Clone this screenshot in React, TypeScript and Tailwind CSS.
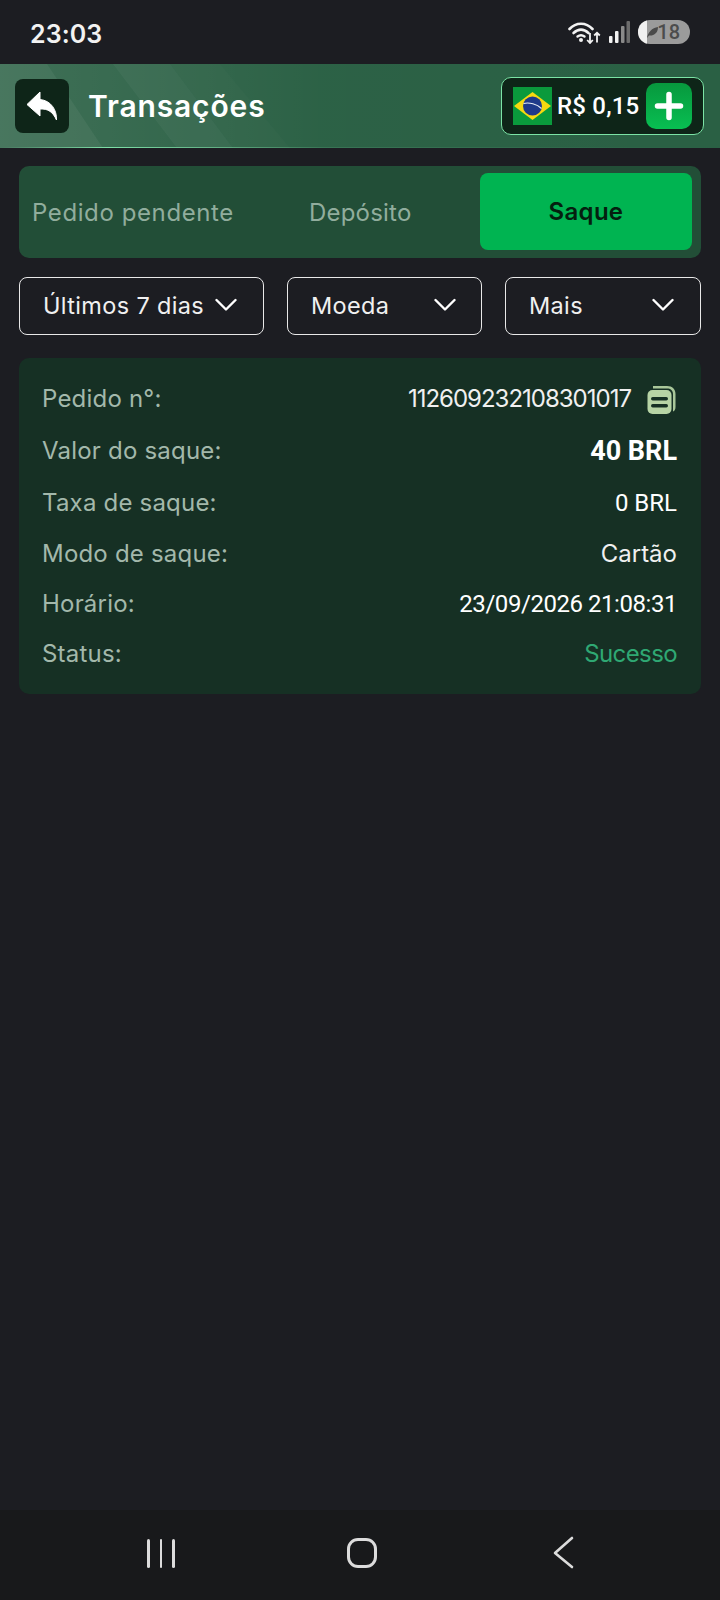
const mont = "font-['Inter','Noto_Sans',sans-serif]"
const roboto = "font-['Roboto',sans-serif]"

const rows = [
  { label: "Pedido n°:", h: "h-[52px]" },
  { label: "Valor do saque:", h: "h-[52px]" },
  { label: "Taxa de saque:", h: "h-[52px]" },
  { label: "Modo de saque:", h: "h-[50px]" },
  { label: "Horário:", h: "h-[50px]" },
  { label: "Status:", h: "h-[50px]" },
]

function StatusBar() {
  return (
    <div className="h-16 flex items-center justify-between pl-[30px] pr-[30px]">
      <span className="pt-[6px] font-['Inter',sans-serif] text-[25px] font-semibold text-[#f2f2f2] tracking-[0.1px]">23:03</span>
      <div className="flex items-center">
        <svg width="33" height="24" viewBox="0 0 33 24" fill="none" className="mr-[8px]">
          <path d="M1.500 9C8 2 18 2 24.500 9" stroke="#f2f2f2" strokeWidth="2.600" strokeLinecap="round" />
          <path d="M5.500 13C10.500 8.500 15.500 8.500 20.500 13" stroke="#f2f2f2" strokeWidth="2.600" strokeLinecap="round" />
          <path d="M9.500 16.500C11.500 15 14.500 15 16.500 16.500" stroke="#f2f2f2" strokeWidth="2.400" strokeLinecap="round" />
          <circle cx="13" cy="20" r="2" fill="#f2f2f2" />
          <path d="M22 13V22.500M19.200 20L22 23L24.800 20" stroke="#f2f2f2" strokeWidth="1.800" />
          <path d="M29 22.500V13M26.200 15.500L29 12.700L31.800 15.500" stroke="#f2f2f2" strokeWidth="1.800" />
        </svg>
        <svg width="21" height="24" viewBox="0 0 21 24" className="mr-[8px]">
          <rect x="0" y="16" width="3.500" height="7" rx="1" fill="#f2f2f2" />
          <rect x="6" y="11" width="3.500" height="12" rx="1" fill="#f2f2f2" />
          <rect x="12" y="6" width="3.500" height="17" rx="1" fill="#8a8a8a" />
          <rect x="17.500" y="1" width="3.500" height="22" rx="1" fill="#6c6c6c" />
        </svg>
        <div className="w-[52px] h-6 rounded-full bg-[#9b9b9b] overflow-hidden relative flex items-center justify-end pr-[10px]">
          <div className="absolute left-0 top-0 bottom-0 w-[9px] bg-[#f0f0f0]" />
          <svg width="13" height="13" viewBox="0 0 13 13" className="absolute left-[8px] top-[6px]">
            <path d="M1 12C2 6 6 2 12 1C12 7 8 10 3 9.500Z" fill="#4a4a4a" />
          </svg>
          <span className="font-['Roboto',sans-serif] text-[20px] font-medium text-[#4c4c4c] leading-none">18</span>
        </div>
      </div>
    </div>
  )
}

function Header() {
  return (
    <div className="h-[84px] relative bg-[#2a6044] flex items-center justify-between pl-[15px] pr-[16px] pb-[1px] overflow-hidden">
      <svg width="720" height="84" viewBox="0 0 720 84" className="absolute inset-0">
        <defs>
          <linearGradient id="fade" x1="0" x2="1" y1="0" y2="0">
            <stop offset="0" stopColor="#fff" stopOpacity="0.1" />
            <stop offset="0.45" stopColor="#fff" stopOpacity="0.01" />
            <stop offset="1" stopColor="#fff" stopOpacity="0" />
          </linearGradient>
          <linearGradient id="line" x1="0" x2="1" y1="0" y2="0">
            <stop offset="0" stopColor="#7fe0a8" stopOpacity="0" />
            <stop offset="0.15" stopColor="#7fe0a8" />
            <stop offset="0.45" stopColor="#7fe0a8" stopOpacity="0.15" />
            <stop offset="1" stopColor="#7fe0a8" stopOpacity="0" />
          </linearGradient>
        </defs>
        <rect width="720" height="84" fill="url(#fade)" />
        <polygon points="0,0 47,0 103,84 0,84" fill="#fff" opacity="0.05" />
        <polygon points="113,0 170,0 233,84 177,84" fill="#fff" opacity="0.04" />
        <polygon points="170,0 220,0 290,84 233,84" fill="#fff" opacity="0.015" />
        <rect y="83" width="720" height="1" fill="url(#line)" />
      </svg>
      <div className="relative flex items-center">
        <div className="w-[54px] h-[54px] rounded-[8px] bg-[#0e2518] flex items-center justify-center">
          <svg width="32" height="30" viewBox="0 0 32 30">
            <path d="M14 1L1 13.500L14 25V18C22 17.500 27 21 30.500 29C31 19 25 9.500 14 8.500Z" fill="#fff" stroke="#fff" strokeLinejoin="round" strokeWidth="1" />
          </svg>
        </div>
        <span className={`${mont} ml-[19px] pt-[2px] text-[30px] font-semibold text-white tracking-[0.85px]`}>Transações</span>
      </div>
      <div className="relative w-[203px] h-[58px] rounded-[10px] border border-[#7be3a5] bg-[#0e2518] flex items-center pl-[11px]">
        <svg width="39" height="38" viewBox="0 0 39 38">
          <rect width="39" height="38" fill="#0a9a3c" />
          <polygon points="19.500,5 38,19 19.500,33 1,19" fill="#f6d90f" />
          <circle cx="19.500" cy="19" r="9.500" fill="#1e3a8a" />
          <path d="M10.500 16.500C16 15 24 17 28.500 21.500" stroke="#e8eef5" strokeWidth="1.200" fill="none" />
        </svg>
        <span className={`${roboto} ml-[5px] text-[24px] font-medium text-white tracking-[0.2px] whitespace-nowrap`}>R$ 0,15</span>
        <div className="ml-auto mr-[11px] w-[46px] h-[46px] rounded-[10px] bg-gradient-to-b from-[#07983d] to-[#08bf52] flex items-center justify-center">
          <svg width="30" height="30" viewBox="0 0 30 30">
            <path d="M15 3.500V26.500M3.500 15H26.500" stroke="#fff" strokeWidth="5.500" strokeLinecap="round" />
          </svg>
        </div>
      </div>
    </div>
  )
}

function Tabs() {
  return (
    <div className="h-[92px] mt-[18px] mx-[19px] rounded-[10px] bg-[#224e37] flex items-center pr-[9px] pb-[2px]">
      <span className={`${mont} ml-[13px] pt-[4px] w-[277px] text-[24px] text-[#91ad9d] tracking-[0.6px] whitespace-nowrap`}>Pedido pendente</span>
      <span className={`${mont} pt-[4px] w-[150px] text-[24px] text-[#91ad9d] tracking-[0.2px]`}>Depósito</span>
      <div className={`${mont} ml-auto pt-[2px] w-[212px] h-[77px] rounded-[8px] bg-[#00b451] flex items-center justify-center text-[24px] font-semibold text-[#04200f] tracking-[0.3px]`}>
        Saque
      </div>
    </div>
  )
}

function Filter({ label, w, pr }: { label: string; w: string; pr: string }) {
  return (
    <div className={`${w} ${pr} pl-[23px] h-[58px] rounded-[8px] border border-[#e8e8e8] flex items-center justify-between`}>
      <span className={`${mont} text-[23.500px] text-[#f0f0f0] tracking-[0.35px] whitespace-nowrap`}>{label}</span>
      <svg width="22" height="14" viewBox="0 0 22 14" className="shrink-0 -mt-[2px]">
        <path d="M1.500 2L11 11.500L20.500 2" stroke="#fff" strokeWidth="2.400" fill="none" strokeLinecap="round" strokeLinejoin="round" />
      </svg>
    </div>
  )
}

function Filters() {
  return (
    <div className="mt-[19px] mx-[19px] flex justify-between">
      <Filter label="Últimos 7 dias" w="w-[245px]" pr="pr-[26px]" />
      <Filter label="Moeda" w="w-[195px]" pr="pr-[25px]" />
      <Filter label="Mais" w="w-[196px]" pr="pr-[26px]" />
    </div>
  )
}

function CopyIcon() {
  return (
    <svg width="30" height="30" viewBox="0 0 30 30" className="ml-[16px]">
      <path d="M6 2H20C25.500 2 28.500 5.500 28.500 10V23C28.500 25.500 27.500 27 26 27.500V10C26 6.500 23.500 4.500 20 4.500H6Z" fill="#a9c79a" />
      <rect x="0.500" y="6" width="24" height="24" rx="5" fill="#b7d4a5" />
      <rect x="4" y="13" width="17" height="3.500" rx="1.700" fill="#163024" />
      <rect x="4" y="20" width="17" height="3.500" rx="1.700" fill="#163024" />
    </svg>
  )
}

function Values({ i }: { i: number }) {
  if (i === 0) {
    return (
      <div className="flex items-center">
        <span className={`${mont} text-[24px] text-[#f0f0f0] tracking-[-1px]`}>112609232108301017</span>
        <CopyIcon />
      </div>
    )
  }
  if (i === 1) return <span className={`${roboto} text-[27px] font-bold text-white`}>40 BRL</span>
  if (i === 2) return <span className={`${roboto} text-[24px] text-white`}>0 BRL</span>
  if (i === 3) return <span className={`${mont} text-[24px] text-[#f0f0f0]`}>Cartão</span>
  if (i === 4) return <span className={`${roboto} text-[24px] text-white tracking-[-0.45px]`}>23/09/2026 21:08:31</span>
  return <span className={`${mont} text-[24px] text-[#2fa873] tracking-[-0.6px]`}>Sucesso</span>
}

function Card() {
  return (
    <div className="mt-[23px] mx-[19px] h-[336px] rounded-[10px] bg-[#163024] pl-[23px] pr-[24px] pt-[15px]">
      {rows.map((r, i) => (
        <div key={r.label} className={`${r.h} flex items-center justify-between`}>
          <span className={`${mont} text-[24px] text-[#a3b8ab] tracking-[0.2px]`}>{r.label}</span>
          <Values i={i} />
        </div>
      ))}
    </div>
  )
}

function NavBar() {
  return (
    <div className="h-[90px] bg-[#18191b] relative shrink-0">
      <div className="absolute left-[147px] top-[29px] flex gap-[10px]">
        <div className="w-[2.500px] h-[29px] bg-[#dcdcdc] rounded-full" />
        <div className="w-[2.500px] h-[29px] bg-[#dcdcdc] rounded-full" />
        <div className="w-[2.500px] h-[29px] bg-[#dcdcdc] rounded-full" />
      </div>
      <div className="absolute left-[347px] top-[28px] w-[30px] h-[30px] rounded-[11px] border-[3px] border-[#dcdcdc]" />
      <svg width="24" height="34" viewBox="0 0 24 34" className="absolute left-[552px] top-[26px]">
        <path d="M20 2L3 17L20 31" stroke="#dcdcdc" strokeWidth="2.600" fill="none" strokeLinecap="round" strokeLinejoin="round" />
      </svg>
    </div>
  )
}

export default function App() {
  return (
    <div className="w-[720px] h-[1600px] bg-[#1c1d22] flex flex-col overflow-hidden">
      <StatusBar />
      <Header />
      <Tabs />
      <Filters />
      <Card />
      <div className="flex-1" />
      <NavBar />
    </div>
  )
}
